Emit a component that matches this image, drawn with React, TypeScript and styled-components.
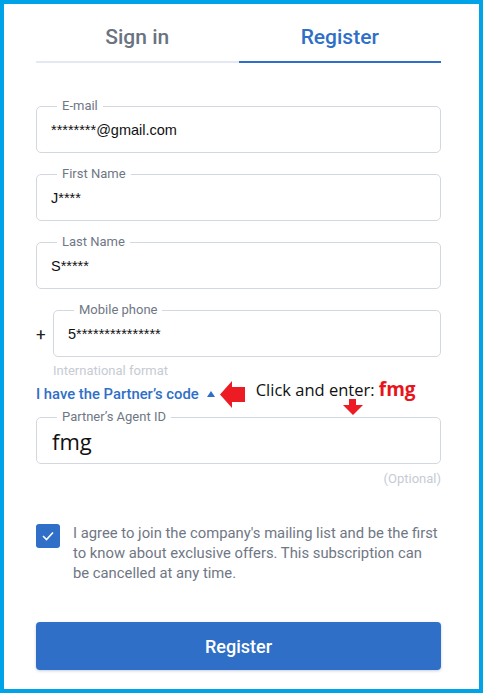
import React from 'react'
import styled, { createGlobalStyle } from 'styled-components'

const GlobalStyle = createGlobalStyle`
  html, body {
    margin: 0;
    padding: 0;
    background: #ffffff;
  }
  body {
    font-family: Roboto, "Liberation Sans", Arial, sans-serif;
  }
  * {
    box-sizing: border-box;
  }
`

const Frame = styled.div`
  width: 483px;
  height: 693px;
  border: 4px solid #00a3e8;
  padding: 0 38px 0 32px;
  background: #ffffff;
  display: flex;
  flex-direction: column;
`

const Tabs = styled.div`
  display: grid;
  grid-template-columns: 1fr 1fr;
`

const Tab = styled.div<{ active?: boolean }>`
  padding: 21px 0 12px;
  font-size: 21px;
  font-weight: 500;
  line-height: 24px;
  text-align: center;
  color: ${props => props.active ? '#2f6fc7' : '#6b7280'};
  border-bottom: 2px solid ${props => props.active ? '#2f6fc7' : '#e3e8f2'};
  cursor: pointer;
`

const Form = styled.div`
  display: flex;
  flex-direction: column;
  margin-top: 43px;
`

const FieldWrap = styled.div<{ gap?: number }>`
  position: relative;
  flex: 1;
  margin-top: ${props => props.gap ?? 0}px;
`

const Label = styled.label`
  position: absolute;
  top: -8px;
  left: 21px;
  padding: 0 5px;
  background: #ffffff;
  font-size: 13px;
  line-height: 16px;
  color: #6f7785;
`

const Input = styled.input<{ big?: boolean }>`
  display: block;
  width: 100%;
  height: 47px;
  margin: 0;
  padding: 0 ${props => props.big ? 15 : 14}px;
  border: 1px solid #d3d8e0;
  border-radius: 5px;
  background: #ffffff;
  outline: none;
  color: #111111;
  font-family: ${props => props.big ? '"Open Sans", "Noto Sans", sans-serif' : '"Liberation Sans", Arial, sans-serif'};
  font-size: ${props => props.big ? 22 : 14.5}px;
`

const PhoneRow = styled.div`
  display: flex;
  align-items: center;
  margin-top: 21px;
`

const Plus = styled.span`
  width: 17px;
  flex: none;
  font-size: 17px;
  color: #222222;
  line-height: 20px;
`

const Hint = styled.div<{ right?: boolean }>`
  font-size: 13px;
  line-height: 16px;
  color: #c6cbd4;
  margin-top: ${props => props.right ? 7 : 6}px;
  padding-left: ${props => props.right ? 0 : 17}px;
  text-align: ${props => props.right ? 'right' : 'left'};
`

const LinkRow = styled.div`
  position: relative;
  display: flex;
  align-items: center;
  height: 20px;
  margin-top: 5px;
`

const PartnerLink = styled.span`
  font-size: 14.8px;
  font-weight: 500;
  color: #2f6fc7;
  line-height: 20px;
  cursor: pointer;
`

const Caret = styled.span`
  margin-left: 8px;
  width: 0;
  height: 0;
  border-left: 4px solid transparent;
  border-right: 4px solid transparent;
  border-bottom: 6px solid #2f6fc7;
`

const LeftArrow = styled.svg`
  margin-left: 5px;
  flex: none;
`

const Note = styled.span`
  margin-left: 11px;
  margin-bottom: 10px;
  font-family: "Open Sans", "Noto Sans", sans-serif;
  font-size: 16.5px;
  color: #111111;
  white-space: nowrap;
`

const NoteCode = styled.b`
  color: #e8141c;
  font-weight: 700;
  font-size: 19px;
`

const DownArrow = styled.svg`
  position: absolute;
  left: 307px;
  top: 15px;
`

const ConsentRow = styled.div`
  display: flex;
  align-items: flex-start;
  gap: 13px;
  margin-top: 36px;
`

const CheckBox = styled.span`
  flex: none;
  width: 24px;
  height: 24px;
  margin-top: 1px;
  border-radius: 3px;
  background: #2f6fc7;
  display: flex;
  align-items: center;
  justify-content: center;
`

const ConsentText = styled.p`
  margin: 0;
  font-size: 14.8px;
  line-height: 20px;
  color: #6f7785;
`

const SubmitButton = styled.button`
  margin-top: 39px;
  height: 48px;
  width: 100%;
  border: none;
  border-radius: 4px;
  background: #2f6fc7;
  box-shadow: 0 1px 3px rgba(30, 60, 120, 0.25);
  color: #ffffff;
  font-family: Roboto, sans-serif;
  font-size: 18px;
  font-weight: 500;
  cursor: pointer;
`

interface FieldProps {
  label: string
  value: string
  gap?: number
  big?: boolean
}

const Field: React.FC<FieldProps> = ({ label, value, gap, big }) => (
  <FieldWrap gap={gap}>
    <Label>{label}</Label>
    <Input readOnly value={value} big={big} />
  </FieldWrap>
)

export default function App() {
  return (
    <>
      <GlobalStyle />
      <Frame>
        <Tabs>
          <Tab>Sign in</Tab>
          <Tab active>Register</Tab>
        </Tabs>
        <Form>
          <Field label="E-mail" value="********@gmail.com" />
          <Field label="First Name" value="J****" gap={21} />
          <Field label="Last Name" value="S*****" gap={21} />
          <PhoneRow>
            <Plus>+</Plus>
            <Field label="Mobile phone" value="5***************" />
          </PhoneRow>
          <Hint>International format</Hint>
          <LinkRow>
            <PartnerLink>I have the Partner’s code</PartnerLink>
            <Caret />
            <LeftArrow width="25" height="27" viewBox="0 0 25 27">
              <path d="M0 13.5 L12 0 L12 6 L25 6 L25 21 L12 21 L12 27 Z" fill="#ed1c24" />
            </LeftArrow>
            <Note>
              Click and enter: <NoteCode>fmg</NoteCode>
            </Note>
            <DownArrow width="20" height="16" viewBox="0 0 20 16">
              <path d="M6 0 L13 0 L13 6 L20 6 L10 16 L0 6 L6 6 Z" fill="#ed1c24" />
            </DownArrow>
          </LinkRow>
          <Field label="Partner’s Agent ID" value="fmg" gap={13} big />
          <Hint right>(Optional)</Hint>
          <ConsentRow>
            <CheckBox>
              <svg width="12" height="10" viewBox="0 0 12 10">
                <path d="M1 5 L4.5 8.5 L11 1.5" fill="none" stroke="#ffffff" strokeWidth="1.6" />
              </svg>
            </CheckBox>
            <ConsentText>
              I agree to join the company's mailing list and be the first to know about exclusive offers. This subscription can be cancelled at any time.
            </ConsentText>
          </ConsentRow>
          <SubmitButton>Register</SubmitButton>
        </Form>
      </Frame>
    </>
  )
}
